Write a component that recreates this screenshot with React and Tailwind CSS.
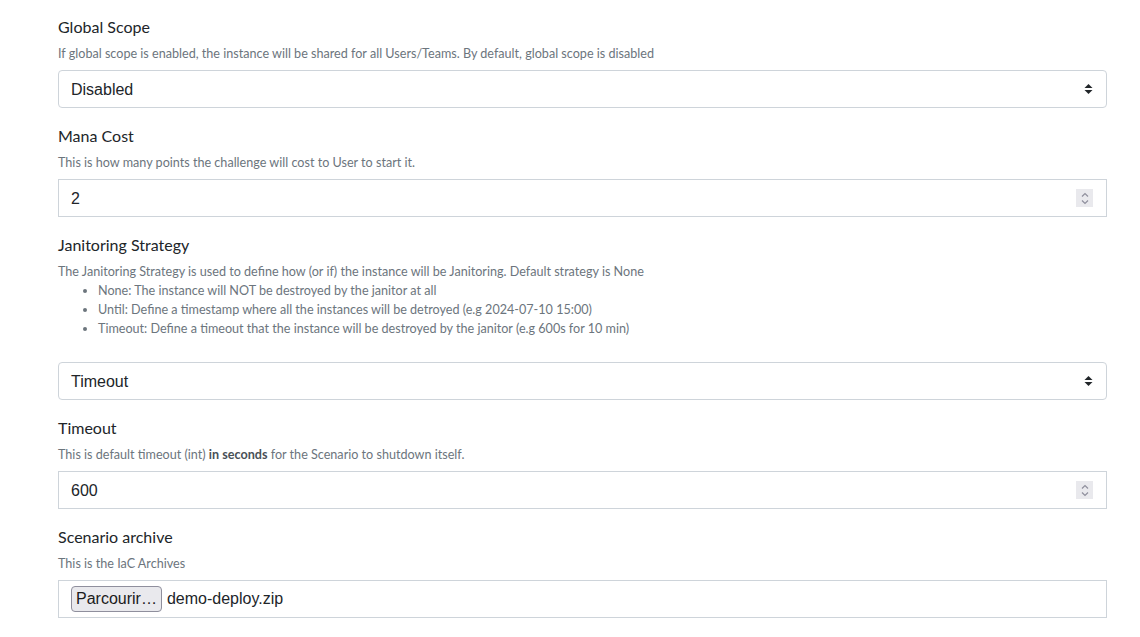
import React from 'react';

const lato = { fontFamily: 'Lato, "Noto Sans", sans-serif' };
const sans = { fontFamily: '"Liberation Sans", Arial, sans-serif' };

function SelectArrows() {
  return (
    <svg width="9" height="12" viewBox="0 0 9 12" className="text-[#212529]">
      <path d="M4.5 1 L8.5 5 L0.5 5 Z" fill="currentColor" />
      <path d="M4.5 11 L8.5 7 L0.5 7 Z" fill="currentColor" />
    </svg>
  );
}

function Spinner() {
  return (
    <div className="w-[17px] h-[18px] bg-[#e9e9ed] flex flex-col items-center justify-center gap-[3px]">
      <svg width="8" height="5" viewBox="0 0 8 5"><path d="M1 4.5 L4 1.5 L7 4.5" fill="none" stroke="#8f8f9d" strokeWidth="1.2" /></svg>
      <svg width="8" height="5" viewBox="0 0 8 5"><path d="M1 0.5 L4 3.5 L7 0.5" fill="none" stroke="#8f8f9d" strokeWidth="1.2" /></svg>
    </div>
  );
}

function Field({ label, help, children }) {
  return (
    <div className="mb-[16px]">
      <label className="block text-[16px] leading-[24px] text-[#212529]">{label}</label>
      <div className="mt-[5px] text-[12.6px] leading-[19px] text-[#6c757d]">{help}</div>
      <div className="mt-[7px]">{children}</div>
    </div>
  );
}

function Select({ value }) {
  return (
    <div className="h-[38px] border border-[#ced4da] rounded-[4px] bg-white flex items-center justify-between pl-[12px] pr-[13px]">
      <span className="text-[16px] text-[#212529] pt-[1px]" style={sans}>{value}</span>
      <SelectArrows />
    </div>
  );
}

function NumberInput({ value }) {
  return (
    <div className="mt-[1px] h-[38px] border border-[#ced4da] bg-white flex items-center justify-between pl-[12px] pr-[13px]">
      <span className="text-[16px] text-[#212529] pt-[1px]" style={sans}>{value}</span>
      <Spinner />
    </div>
  );
}

export default function App() {
  return (
    <div className="min-h-screen bg-white pl-[58px] pr-[33px] pt-[15px]" style={lato}>
      <Field label="Global Scope" help="If global scope is enabled, the instance will be shared for all Users/Teams. By default, global scope is disabled">
        <Select value="Disabled" />
      </Field>

      <Field label="Mana Cost" help="This is how many points the challenge will cost to User to start it.">
        <NumberInput value="2" />
      </Field>

      <Field
        label="Janitoring Strategy"
        help={
          <>
            The Janitoring Strategy is used to define how (or if) the instance will be Janitoring. Default strategy is None
            <ul className="list-disc pl-[40px] mb-[24px]">
              <li>None: The instance will NOT be destroyed by the janitor at all</li>
              <li>Until: Define a timestamp where all the instances will be detroyed (e.g 2024-07-10 15:00)</li>
              <li>Timeout: Define a timeout that the instance will be destroyed by the janitor (e.g 600s for 10 min)</li>
            </ul>
          </>
        }
      >
        <Select value="Timeout" />
      </Field>

      <Field
        label="Timeout"
        help={
          <>
            This is default timeout (int) <b className="font-bold text-[#495057]">in seconds</b> for the Scenario to shutdown itself.
          </>
        }
      >
        <NumberInput value="600" />
      </Field>

      <Field label="Scenario archive" help="This is the IaC Archives">
        <div className="h-[38px] border border-[#ced4da] bg-white flex items-center pl-[12px]" style={sans}>
          <span className="h-[26px] px-[4px] flex items-center border border-[#8f8f9d] rounded-[4px] bg-[#e9e9ed] text-[16px] text-[#1b1b1b]">Parcourir…</span>
          <span className="ml-[5px] text-[16px] text-[#212529]">demo-deploy.zip</span>
        </div>
      </Field>
    </div>
  );
}
